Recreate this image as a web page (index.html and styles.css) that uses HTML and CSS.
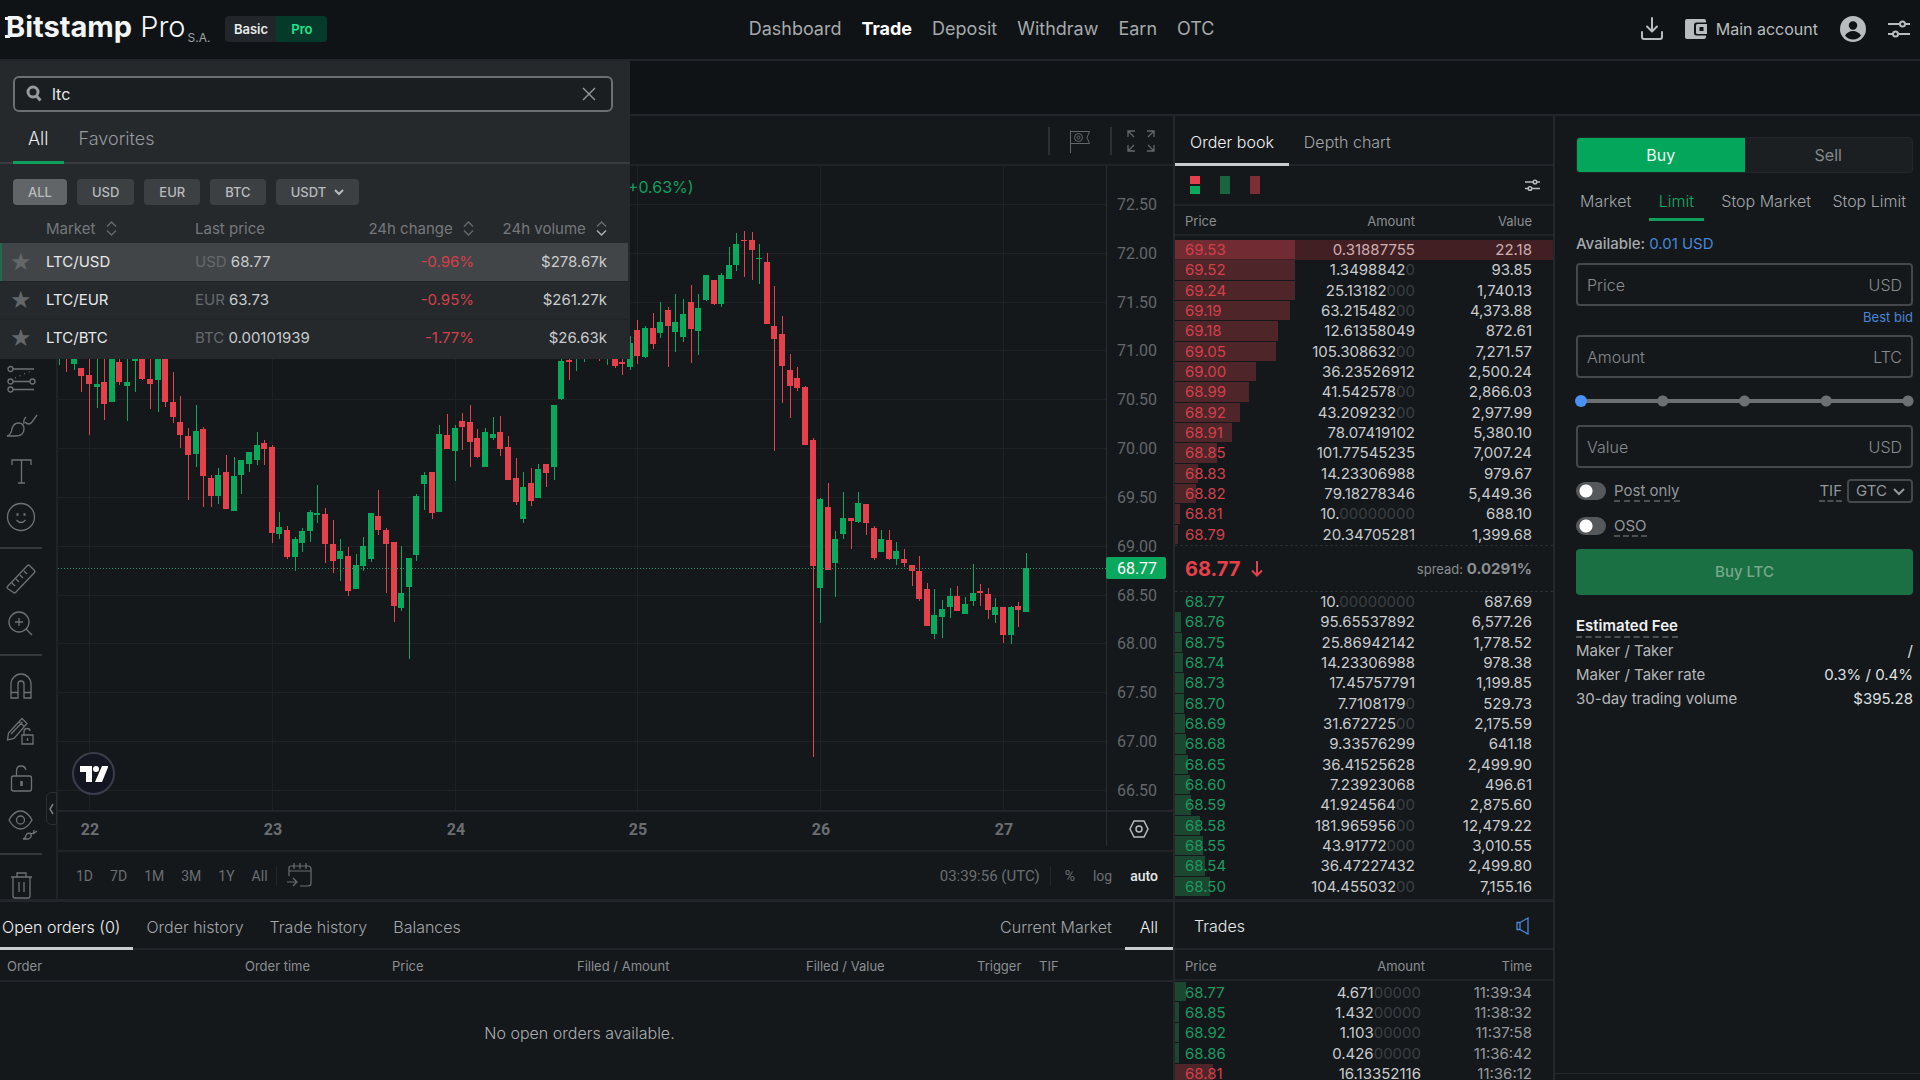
FILE: index.html
```html
<!DOCTYPE html>
<html lang="en">
<head>
<meta charset="utf-8">
<title>Bitstamp Pro</title>
<link rel="stylesheet" href="styles.css">
</head>
<body>
<div class="app">
  <header class="topbar">
    <div class="brand">
      <a class="logo" href="#"><b>Bitstamp</b> <span>Pro</span></a>
      <span class="entity">S.A.</span>
      <div class="mode"><button type="button">Basic</button><button type="button" class="on">Pro</button></div>
    </div>
    <nav class="nav">
      <a href="#">Dashboard</a><a href="#" class="on">Trade</a><a href="#">Deposit</a><a href="#">Withdraw</a><a href="#">Earn</a><a href="#">OTC</a>
    </nav>
    <div class="account">
      <button type="button" class="icon-btn" aria-label="Install app"><svg width="24" height="24" viewBox="0 0 24 24" fill="none" stroke="currentColor" stroke-width="2" stroke-linecap="round" stroke-linejoin="round"><path d="M12 1v13M7 9.500l5 5 5-5M2 15v5q0 2 2 2h16q2 0 2-2v-5"/></svg></button>
      <button type="button" class="wallet"><svg width="24" height="22" viewBox="0 0 24 22"><path fill="currentColor" d="M3 1h17q2 0 2 2v1.500H12.500q-2.500 0-2.500 2.500v8q0 2.500 2.500 2.500H22V19q0 2-2 2H3q-2 0-2-2V3q0-2 2-2z"/><path fill="currentColor" fill-rule="evenodd" d="M13.500 6H23v10h-9.500q-1.500 0-1.500-1.500v-7q0-1.500 1.500-1.500zm2 3v4h4V9z"/></svg>Main account</button>
      <button type="button" class="icon-btn" aria-label="Profile"><svg width="26" height="26" viewBox="0 0 26 26"><circle cx="13" cy="13" r="13" fill="currentColor"/><circle cx="13" cy="9.500" r="4.200" fill="#0f1316"/><path d="M5 19.500q3-4.500 8-4.500t8 4.500q-3 4-8 4t-8-4z" fill="#0f1316"/></svg></button>
      <button type="button" class="icon-btn" aria-label="Settings"><svg width="22" height="20" viewBox="0 0 22 20" fill="none" stroke="currentColor" stroke-width="2"><path d="M0 5h12M17 5h5M0 15h5M10 15h12"/><circle cx="14.500" cy="5" r="2.500"/><circle cx="7.500" cy="15" r="2.500"/></svg></button>
    </div>
  </header>

  <div class="marketbar">
    <section class="picker" aria-label="Markets">
      <div class="search">
        <svg width="16" height="18" viewBox="0 0 16 18" fill="none" stroke="currentColor" stroke-width="3"><circle cx="7" cy="7" r="5"/><path d="M10.500 11l4 4.500"/></svg>
        <input type="text" value="ltc" aria-label="Search markets">
        <button type="button" aria-label="Clear"><svg width="14" height="14" viewBox="0 0 14 14" stroke="currentColor" stroke-width="1.400"><path d="M1 1l12 12M13 1L1 13"/></svg></button>
      </div>
      <div class="picker-tabs"><button type="button" class="on">All</button><button type="button">Favorites</button></div>
      <div class="chips">
        <button type="button" class="on">ALL</button><button type="button">USD</button><button type="button">EUR</button><button type="button">BTC</button>
        <button type="button">USDT <svg width="10" height="8" viewBox="0 0 10 8" fill="none" stroke="currentColor" stroke-width="2"><path d="M1 2l4 4 4-4"/></svg></button>
      </div>
      <table class="markets">
        <colgroup><col class="c-star"><col class="c-market"><col class="c-last"><col class="c-change"><col class="c-vol"></colgroup>
        <thead><tr><th></th>
          <th>Market <svg width="11" height="15" viewBox="0 0 11 15"><path d="M1 5.500l4.500-4.500L10 5.500M1 9.500l4.500 4.500L10 9.500"/></svg></th>
          <th>Last price</th>
          <th class="num">24h change <svg width="11" height="15" viewBox="0 0 11 15"><path d="M1 5.500l4.500-4.500L10 5.500M1 9.500l4.500 4.500L10 9.500"/></svg></th>
          <th class="num">24h volume <svg width="11" height="15" viewBox="0 0 11 15"><path d="M1 5.500l4.500-4.500L10 5.500"/><path class="hot" d="M1 9.500l4.500 4.500L10 9.500"/></svg></th></tr></thead>
        <tbody>
          <tr class="on"><td class="star">★</td><td class="pair">LTC/USD</td><td><i>USD</i> 68.77</td><td class="num down">-0.96%</td><td class="num">$278.67k</td></tr>
          <tr><td class="star">★</td><td class="pair">LTC/EUR</td><td><i>EUR</i> 63.73</td><td class="num down">-0.95%</td><td class="num">$261.27k</td></tr>
          <tr><td class="star">★</td><td class="pair">LTC/BTC</td><td><i>BTC</i> 0.00101939</td><td class="num down">-1.77%</td><td class="num">$26.63k</td></tr>
        </tbody>
      </table>
    </section>
  </div>

  <main class="board">
    <div class="left">
      <section class="chart" aria-label="Price chart">
        <div class="chart-top">
          <button type="button" aria-label="Layout"><svg width="22" height="24" viewBox="0 0 22 24" fill="none" stroke="currentColor"><path d="M1.500 24V1.500M1.500 2.500h19l-2.500 6 2.500 6h-19"/><circle cx="9.500" cy="8.500" r="4"/><circle cx="9.500" cy="8.500" r="1.500"/></svg></button>
          <button type="button" aria-label="Full screen"><svg width="28" height="22" viewBox="0 0 28 22" fill="none" stroke="currentColor" stroke-width="1.300"><path d="M1 7V1h7M1 1l6 6M20 1h7v6M27 1l-6 6M1 15v6h7M1 21l6-6M27 15v6h-7M27 21l-6-6"/></svg></button>
        </div>
        <div class="chart-mid">
          <div class="tools">
            <button type="button" aria-label="Patterns"><svg viewBox="0 0 30 30"><circle cx="4.500" cy="4" r="2.500"/><circle cx="4.500" cy="16.500" r="2.500"/><circle cx="26.500" cy="16.500" r="2.500"/><circle cx="4.500" cy="24.500" r="2.500"/><path d="M7 4h21M7 16.500h17M7 24.500h21"/><path stroke-dasharray="1 4" d="M9 13L25 6"/></svg></button>
            <button type="button" aria-label="Brush"><svg viewBox="0 0 30 30"><path d="M1 25q4-1 5-7 1.500-6 6.500-6 5.500 0 5.500 6 0 7-9 7zM18 13q-1-4 2-7M19 11q4 4 7 0l5-7"/></svg></button>
            <button type="button" aria-label="Text"><svg viewBox="0 0 30 30"><path d="M6 8V3h19v5M15.500 3v23M12 26h7"/></svg></button>
            <button type="button" aria-label="Icons"><svg viewBox="0 0 30 30"><circle cx="15" cy="14" r="13.500"/><path d="M10.500 17q4.500 5 9 0"/><path stroke-width="2.500" d="M10.500 11.500h2M17.500 11.500h2"/></svg></button>
            <hr>
            <button type="button" aria-label="Measure"><svg viewBox="0 0 30 30"><path d="M1.500 22.500L21.500 1.500q1-1 2 0l5 5q1 1 0 2L9.500 28.500q-1 1-2 0l-6-4q-1-1 0-2zM6 19l3 3M10 15l3 3M14 11l3 3M18 7l3 3"/></svg></button>
            <button type="button" aria-label="Zoom in"><svg viewBox="0 0 30 30"><circle cx="13" cy="12" r="10"/><path d="M20 19l6 6M13 8v8M9 12h8"/></svg></button>
            <hr>
            <button type="button" aria-label="Magnet"><svg viewBox="0 0 30 30"><path d="M5 27V13a10 10 0 0 1 20 0v14h-7V13a3 3 0 0 0-6 0v14zM5 21.500h7M18 21.500h7"/></svg></button>
            <button type="button" aria-label="Stay in drawing mode"><svg viewBox="0 0 30 30"><path d="M1.500 23l1-7L16 1.500l5 5L8 21.500zM13 5l5 4M5 17L16.500 5M16 18h11v9H16zM18 18v-3q0-3.500 3-3.500t3 2.500M21.500 21v3"/></svg></button>
            <button type="button" aria-label="Lock drawings"><svg viewBox="0 0 30 30"><rect x="5.500" y="13" width="20" height="15" rx="2"/><path d="M10.500 13V8q0-5 4.500-5 4 0 5 4"/><path stroke-width="2.500" d="M15.500 18v5"/></svg></button>
            <button type="button" aria-label="Hide drawings"><svg viewBox="0 0 30 30"><path d="M3 11q5-9 11.500-9T26 11q-5 9-11.500 9T3 11z"/><circle cx="14.500" cy="11" r="4"/><path d="M17 30q3-1 3-4 2-3 5-1 1 4-3 5zM24 24q4 2 4-3M27 25l4-3"/></svg></button>
            <hr>
            <button type="button" aria-label="Remove drawings"><svg viewBox="0 0 30 30"><path d="M5 7h21M11 7V3h9v4M7 7v19q0 2 2 2h13q2 0 2-2V7M13 12v10M18 12v10"/></svg></button>
          </div>
          <button type="button" class="collapse" aria-label="Collapse toolbar"><svg width="5" height="12" viewBox="0 0 5 12" fill="none" stroke="currentColor" stroke-width="1.500"><path d="M4 1L1 6l3 5"/></svg></button>
          <div class="plot">
            <svg id="plot" role="img" aria-label="LTC/USD candles"></svg>
            <span class="legend">(+0.63%)</span>
            <a class="tv" href="#" aria-label="TradingView"><svg width="28" height="16" viewBox="0 0 28 16" fill="#fff"><path d="M0 0h12v16H6V6H0zM22 0h6.500L22 16h-7z"/><circle cx="16" cy="3" r="3"/></svg></a>
            <div class="range">
              <div class="range-set"><button type="button">1D</button><button type="button">7D</button><button type="button">1M</button><button type="button">3M</button><button type="button">1Y</button><button type="button">All</button></div>
              <button type="button" class="goto" aria-label="Go to date"><svg width="25" height="25" viewBox="0 0 25 25" fill="none" stroke="currentColor" stroke-width="1.200"><path d="M2 13V5q0-2 2-2h17q3 0 3 3v14q0 3-3 3h-8M2 8h22M7 0v6M13 0v6M19 0v6M0 19h9M6 15l4 4-4 4"/></svg></button>
              <div class="scale"><button type="button" class="clock">03:39:56 (UTC)</button><button type="button">%</button><button type="button">log</button><button type="button" class="on">auto</button></div>
            </div>
          </div>
        </div>
      </section>
      <section class="orders">
        <div class="tabs">
          <button type="button" class="on">Open orders (0)</button><button type="button">Order history</button><button type="button">Trade history</button><button type="button">Balances</button>
          <button type="button" class="push">Current Market</button><button type="button" class="on">All</button>
        </div>
        <table class="open">
          <colgroup><col class="o1"><col class="o2"><col class="o3"><col class="o4"><col class="o5"><col class="o6"><col></colgroup>
          <thead><tr><th>Order</th><th>Order time</th><th>Price</th><th>Filled / Amount</th><th>Filled / Value</th><th>Trigger</th><th>TIF</th></tr></thead>
          <tbody><tr><td colspan="7">No open orders available.</td></tr></tbody>
        </table>
      </section>
    </div>

    <div class="middle">
      <section class="book">
        <div class="tabs book-tabs"><button type="button" class="on">Order book</button><button type="button">Depth chart</button></div>
        <div class="book-view">
          <button type="button" class="v-both" aria-label="Both sides"></button><button type="button" class="v-buy" aria-label="Bids"></button><button type="button" class="v-sell" aria-label="Asks"></button>
          <button type="button" class="v-set" aria-label="Book settings"><svg width="15" height="14" viewBox="0 0 15 14" fill="none" stroke="currentColor" stroke-width="1.500"><path d="M0 4h8M12 4h3M0 10.500h3M7 10.500h8"/><circle cx="10" cy="4" r="1.800"/><circle cx="5" cy="10.500" r="1.800"/></svg></button>
        </div>
        <div class="cols"><span>Price</span><span>Amount</span><span>Value</span></div>
        <table class="ladder sell" aria-label="Asks"><tbody id="asks"></tbody></table>
        <div class="last"><strong>68.77</strong><svg width="12" height="16" viewBox="0 0 12 16" fill="none" stroke="currentColor" stroke-width="2"><path d="M6 0v14M1 9.500l5 5 5-5"/></svg><span>spread: <b>0.0291%</b></span></div>
        <table class="ladder buy" aria-label="Bids"><tbody id="bids"></tbody></table>
      </section>
      <section class="trades">
        <div class="trades-head"><h2>Trades</h2><button type="button" aria-label="Sound"><svg width="13" height="18" viewBox="0 0 13 18" fill="none" stroke="currentColor" stroke-width="1.300"><path d="M4 5.500L12 1v16l-8-4.500zM4 5.500H1v7h3"/></svg></button></div>
        <div class="cols"><span>Price</span><span>Amount</span><span>Time</span></div>
        <table class="ladder recent" aria-label="Recent trades"><tbody id="trades"></tbody></table>
      </section>
    </div>

    <form class="ticket">
      <div class="side"><button type="button" class="on">Buy</button><button type="button">Sell</button></div>
      <div class="kinds"><button type="button">Market</button><button type="button" class="on">Limit</button><button type="button">Stop Market</button><button type="button">Stop Limit</button></div>
      <p class="avail">Available: <a href="#">0.01 USD</a></p>
      <div class="field"><input type="text" placeholder="Price" aria-label="Price"><span>USD</span></div>
      <a class="best" href="#">Best bid</a>
      <div class="field"><input type="text" placeholder="Amount" aria-label="Amount"><span>LTC</span></div>
      <input class="slider" type="range" min="0" max="100" value="0" aria-label="Share of balance">
      <div class="field"><input type="text" placeholder="Value" aria-label="Value"><span>USD</span></div>
      <div class="opts">
        <input type="checkbox" id="post"><label for="post">Post only</label>
        <label class="tif" for="tif">TIF</label>
        <span class="select"><select id="tif"><option>GTC</option></select><svg width="12" height="8" viewBox="0 0 12 8" fill="none" stroke="currentColor" stroke-width="2"><path d="M1 1l5 5 5-5"/></svg></span>
      </div>
      <div class="opts"><input type="checkbox" id="oso"><label for="oso">OSO</label></div>
      <button type="submit" class="submit" disabled>Buy LTC</button>
      <h3>Estimated Fee</h3>
      <dl class="fees"><dt>Maker / Taker</dt><dd>/</dd><dt>Maker / Taker rate</dt><dd>0.3% / 0.4%</dd><dt>30-day trading volume</dt><dd>$395.28</dd></dl>
    </form>
  </main>
</div>
<script src="app.js"></script>
</body>
</html>
```
FILE: styles.css
```css
* { box-sizing: border-box; }
body { margin: 0; background: #14181b; color: #c9cbcd; font: 15px/20px Inter, "Liberation Sans", sans-serif; }
button { margin: 0; padding: 0; border: 0; background: none; color: inherit; font: inherit; cursor: pointer; white-space: nowrap; }
a { color: inherit; text-decoration: none; }
svg { display: block; flex: none; }
h2, h3, p, dl, dd { margin: 0; font: inherit; }
table { border-collapse: collapse; border-spacing: 0; }
th { font-weight: 400; text-align: left; }
th, td { padding: 0; }

.app { display: flex; flex-direction: column; height: 100vh; overflow: hidden; }

/* top bar */
.topbar { display: flex; justify-content: space-between; align-items: center; height: 61px; flex: none; padding: 0 10px 2px 5px; background: #0f1316; border-bottom: 2px solid #22262a; }
.brand { display: flex; align-items: center; }
.logo { display: block; position: relative; margin-top: -4px; padding-left: 1px; color: #f4f5f6; font: 400 29px/32px Inter, sans-serif; }
.logo b { font-weight: 700; }
.logo span { font-weight: 300; }
.logo::before { content: ""; position: absolute; left: 0; top: 6px; width: 5px; height: 15px; border: solid #f4f5f6; border-width: 3px 0; }
.entity { margin: 18px 15px 0 2px; font-size: 12px; line-height: 16px; color: #a0a3a6; }
.mode { display: flex; height: 26px; border-radius: 4px; overflow: hidden; background: #22262a; font-weight: 600; font-size: 13px; color: #e8eaeb; }
.mode button { width: 51px; }
.mode .on { background: #053a2a; color: #1fe58c; }
.nav { display: flex; gap: 20px; margin-left: 18px; font-size: 18px; line-height: 24px; color: #a6a9ab; }
.nav .on { color: #fff; font-weight: 700; }
.account { display: flex; align-items: center; color: #b9bcbe; }
.icon-btn { margin-left: 22px; }
.wallet { display: flex; align-items: center; gap: 8px; margin-left: 20px; font-size: 16px; }

/* market bar and market picker */
.marketbar { position: relative; z-index: 2; flex: none; height: 55px; background: #0f1316; border-bottom: 2px solid #22262a; }
.picker { position: absolute; top: 0; left: 0; width: 630px; padding-bottom: 2px; background: #25292c; overflow: hidden; }
.search { display: flex; align-items: center; gap: 10px; height: 36px; margin: 15px 17px 0 13px; padding: 0 15px 0 11px; border: 2px solid #6d7073; border-radius: 6px; background: #1a1e21; color: #97999c; }
.search input { flex: 1; min-width: 0; padding: 0; border: 0; background: none; outline: 0; color: #e6e8e9; font: inherit; font-size: 16px; }
.picker-tabs { display: flex; height: 52px; padding-left: 13px; border-bottom: 2px solid #383c3f; font-size: 18px; font-weight: 300; color: #95989b; }
.picker-tabs button { height: 52px; padding: 5px 15px 0; border-bottom: 3px solid transparent; }
.picker-tabs .on { border-bottom-color: #0f9f5d; color: #e6e8e9; }
.chips { display: flex; gap: 10px; padding: 15px 13px 0; }
.chips button { display: flex; align-items: center; gap: 8px; height: 26px; padding: 0 15px; border-radius: 4px; background: #3c4043; color: #b9bbbd; font-size: 13px; font-weight: 500; }
.chips .on { background: #626567; }
.markets { width: 628px; table-layout: fixed; margin-top: 10px; }
.c-star { width: 46px; } .c-market { width: 149px; } .c-last { width: 151px; } .c-change { width: 128px; }
.markets th { height: 28px; color: #75787b; }
.markets th svg { display: inline-block; vertical-align: -2px; margin-left: 6px; fill: none; stroke: #63666a; stroke-width: 1.500; }
.markets .hot { stroke: #a9abad; }
.markets td { height: 38px; border-bottom: 1px solid #202427; }
.markets tr:last-child td { border: 0; }
.markets .on { background: #424547; box-shadow: inset 2px 0 #23694c; }
.markets .num { text-align: right; }
.markets .num:last-child { padding-right: 21px; }
.markets .star { padding-left: 10px; font: 24px/20px "DejaVu Sans", sans-serif; color: #64676a; }
.markets .pair { color: #e6e8e9; }
.markets i { font-style: normal; color: #66696c; }
.down { color: #d3404b; }

/* board */
.board { flex: 1; min-height: 0; display: grid; grid-template-columns: minmax(0, 1fr) 382px 365px; grid-template-rows: minmax(0, 1fr); }
.left, .middle { display: flex; flex-direction: column; min-height: 0; min-width: 0; }
.chart { flex: 1; min-height: 0; display: flex; flex-direction: column; overflow: hidden; }
.chart-top { flex: none; display: flex; justify-content: flex-end; align-items: center; height: 50px; padding-top: 2px; border-bottom: 2px solid #1f2326; color: #64676a; }
.chart-top button { display: flex; align-items: center; height: 28px; padding: 0 19px; border-left: 2px solid #2c3033; }
.chart-top button:last-child { padding: 0 18px 0 15px; }
.chart-mid { position: relative; flex: 1; min-height: 0; display: flex; }
.tools { width: 58px; flex: none; padding-top: 191px; border-right: 2px solid #1f2326; color: #6f7275; }
.tools button { display: flex; align-items: center; justify-content: center; width: 42px; height: 46px; }
.tools svg { width: 30px; height: 30px; overflow: visible; fill: none; stroke: currentColor; stroke-width: 1.300; }
.tools hr { width: 42px; height: 2px; margin: 6px 0 7px; border: 0; background: #34383b; }
.collapse { position: absolute; left: 46px; bottom: 74px; display: flex; align-items: center; justify-content: center; width: 11px; height: 33px; border: 1px solid #2a2e31; border-radius: 5px 0 0 5px; color: #7b7e80; }
.plot { position: relative; flex: 1; min-width: 0; display: flex; flex-direction: column; }
#plot { flex: 1; min-height: 0; width: 100%; font: 16px Roboto, sans-serif; }
.legend { position: absolute; left: 564px; top: 11px; color: #0f9f5d; font-size: 16px; }
.tv { position: absolute; left: 14px; bottom: 104px; display: flex; align-items: center; justify-content: center; width: 43px; height: 43px; border: 2px solid #3b3d4b; border-radius: 50%; background: #131520; }
.range { flex: none; display: flex; align-items: center; height: 49px; padding: 0 15px 0 18px; border-top: 2px solid #1f2326; color: #6b6e71; font: 14px/20px Roboto, sans-serif; }
.range-set { display: flex; gap: 17px; padding-right: 8px; border-right: 1px solid #24282b; }
.goto { margin-left: 10px; }
.scale { display: flex; gap: 18px; margin-left: auto; }
.clock { padding-right: 10px; margin-right: -4px; border-right: 1px solid #24282b; font-size: 15px; }
.scale .on { color: #e6e8e9; font-weight: 500; }

/* orders */
.orders { flex: none; height: 181px; border-top: 3px solid #22262a; }
.tabs { display: flex; height: 48px; border-bottom: 2px solid #22262a; color: #a2a5a7; font-size: 16px; font-weight: 300; }
.tabs button { height: 48px; padding: 4px 15px 0; border-bottom: 3px solid transparent; }
.tabs .on { border-color: #c9cbcd; color: #f0f1f2; }
.orders .tabs button { padding: 4px 13px 0; }
.orders .tabs button:first-child { padding-left: 2px; }
.orders .tabs button:last-child { padding: 4px 15px 0; }
.orders .tabs .push { margin-left: auto; }
.open { width: 100%; table-layout: fixed; }
.o1 { width: 245px; } .o2 { width: 147px; } .o3 { width: 185px; } .o4 { width: 229px; } .o5 { width: 171px; } .o6 { width: 62px; }
.open th, .cols { color: #8b8e91; font-size: 13px; }
.open th { height: 31px; padding-top: 2px; border-bottom: 2px solid #22262a; }
.open th:first-child { padding-left: 7px; }
.open td { height: 102px; padding-right: 14px; text-align: center; color: #aaadaf; font-size: 16px; font-weight: 300; }

/* order book */
.middle { border-left: 2px solid #24282b; border-right: 2px solid #24282b; }
.book { flex: 1; min-height: 0; overflow: hidden; display: flex; flex-direction: column; }
.book-tabs { flex: none; height: 50px; }
.book-tabs button { height: 50px; }
.book-view { flex: none; display: flex; align-items: center; gap: 20px; height: 40px; padding: 0 13px 0 15px; border-bottom: 2px solid #1f2326; color: #b9bbbd; }
.book-view button { width: 10px; height: 18px; }
.v-both { background: linear-gradient(#e5414d 8px, transparent 8px 10px, #0aa85c 10px); }
.v-buy { background: #1a6540; }
.v-sell { background: #7e2d35; }
.book-view .v-set { width: auto; height: auto; margin-left: auto; }
.cols { flex: none; display: grid; grid-template-columns: 80px 1fr 117px; align-items: center; height: 30px; padding: 2px 21px 0 10px; border-bottom: 2px solid #1f2326; }
.cols span + span { text-align: right; }
.ladder { flex: none; width: 100%; height: 305px; table-layout: fixed; font-size: 15px; line-height: 18px; }
.ladder td { position: relative; padding: 0; text-align: right; }
.ladder td:first-child { width: 90px; padding-left: 10px; text-align: left; }
.ladder td:last-child { width: 138px; padding-right: 21px; }
.ladder .bar { position: absolute; left: 0; top: 0; bottom: 1px; background: #4e2529; }
.ladder .px { position: relative; color: #d3404b; }
.ladder .z { color: #3b3f42; }
.ladder tr.up .bar { background: #1b4630; }
.ladder tr.up .px { color: #1c9a60; }
.ladder tr.hit { background: #421f23; color: #cfaeb0; }
.ladder tr.hit .bar { background: #702c32; }
.sell { margin-top: 4px; }
.last { flex: none; display: flex; align-items: center; height: 47px; padding: 0 21px 0 10px; border: dashed #2a2e31; border-width: 1px 0; color: #e5414d; }
.last strong { margin-right: 11px; font-size: 20px; font-weight: 700; }
.last span { margin-left: auto; color: #8b8e91; font-size: 13px; }
.last b { font-size: 15px; font-weight: 700; }
.trades { flex: none; height: 181px; overflow: hidden; border-top: 3px solid #22262a; }
.trades-head { display: flex; justify-content: space-between; align-items: center; height: 48px; padding: 2px 24px 0 19px; border-bottom: 2px solid #22262a; color: #e6e8e9; font-size: 16px; font-weight: 300; }
.trades-head button { color: #4a86d8; }
.trades .cols { height: 31px; grid-template-columns: 80px 1fr 107px; }
.recent { height: 102px; margin-top: 1px; line-height: 19px; }
.ladder.recent td:last-child { width: 132px; color: #96999b; }

/* order ticket */
.ticket { display: flex; flex-direction: column; padding: 21px 7px 0 21px; margin-bottom: 6px; border-bottom: 1px solid #24282b; overflow: hidden; }
.side { flex: none; display: flex; height: 36px; border: 1px solid #22262a; border-radius: 4px; overflow: hidden; background: #1b1f22; color: #85888b; font-size: 16px; }
.side button { flex: 1; }
.side .on { background: #03a65a; color: #eafaf2; }
.kinds { display: flex; justify-content: space-between; margin-top: 8px; padding-right: 3px; color: #a2a5a7; font-size: 16px; font-weight: 300; }
.kinds button { height: 40px; padding: 3px 4px 0; border-bottom: 3px solid transparent; }
.kinds .on { padding: 3px 10px 0; border-color: #0f9f5d; color: #0fae66; }
.avail { margin: 13px 0 9px; color: #a6a9ab; font-weight: 500; }
.avail a, .best { color: #4a86d8; font-weight: 400; }
.best { align-self: flex-end; margin: 1px 0 8px; font-size: 13px; }
.field { flex: none; display: flex; align-items: center; height: 43px; padding: 0 9px; border: 2px solid #45484b; border-radius: 4px; color: #888b8d; font-size: 16px; font-weight: 300; }
.field input { flex: 1; min-width: 0; padding: 0; border: 0; background: none; outline: 0; color: #e6e8e9; font: inherit; }
.field input::placeholder { color: #888b8d; opacity: 1; }
.slider { appearance: none; flex: none; width: calc(100% + 2px); height: 14px; margin: 16px 0 17px -1px; background: none; }
.slider::-webkit-slider-runnable-track { height: 12px; background:
  radial-gradient(circle at calc(25% + 3px) 50%, #6d7073 5px, transparent 6px),
  radial-gradient(circle at 50% 50%, #6d7073 5px, transparent 6px),
  radial-gradient(circle at calc(75% - 3px) 50%, #6d7073 5px, transparent 6px),
  radial-gradient(circle at calc(100% - 6px) 50%, #6d7073 5px, transparent 6px),
  linear-gradient(#6d7073, #6d7073) 6px 50% / calc(100% - 12px) 4px no-repeat; }
.slider::-webkit-slider-thumb { appearance: none; width: 12px; height: 12px; border-radius: 50%; background: #4a90f5; }
.opts { display: flex; align-items: center; height: 24px; margin-top: 11px; color: #94979a; }
.opts + .opts { margin-top: 11px; }
.opts label { border-bottom: 2px dashed #4d5053; line-height: 19px; }
.opts input { appearance: none; width: 30px; height: 18px; margin: 0 8px 0 0; border-radius: 9px; background: radial-gradient(circle at 10px 9px, #fff 6px, transparent 7px), #55585b; }
.opts .tif { margin: 0 5px 0 auto; }
.select { position: relative; display: flex; align-items: center; width: 66px; height: 24px; border: 2px solid #45484b; border-radius: 4px; }
.select select { appearance: none; width: 100%; padding: 0 0 0 7px; border: 0; background: none; color: inherit; font: inherit; outline: 0; }
.select svg { position: absolute; right: 6px; top: 7px; pointer-events: none; }
.submit { flex: none; height: 46px; margin: 11px 0 21px; border-radius: 4px; background: #1a7042; color: #76a98c; font-weight: 500; }
.ticket h3 { align-self: flex-start; border-bottom: 2px dashed #4d5053; color: #f0f1f2; font-weight: 600; }
.fees { display: grid; grid-template-columns: 1fr auto; margin-top: 1px; line-height: 24px; color: #b4b7b9; }
.fees dd { text-align: right; color: #dfe1e2; }
```
FILE: app.js
```js
// Hourly candles: direction, body top, body bottom, high, low, counted in steps below BASE.
const BASE = 71.007, STEP = 293.4;
const candles = `g -30 0 -60 46;r -30 0 -60 66;g 0 42 -20 62;r 56 80 54 128;r 75 102 0 255;g 104 111 0 176;r 96 162 0 210;g 0 158 0 158;r 38 96 0 105;g 96 108 0 214;g 0 33 0 128;r 0 88 0 90;r 87 104 0 178;g 0 90 0 188;r 0 157 0 172;r 156 201 66 219;r 216 257 140 294;r 258 315 236 451;g 243 312 166 351;r 237 380 232 471;r 384 438 377 471;g 375 440 354 462;r 366 477 317 477;g 378 483 323 483;g 331 375 331 432;g 308 342 308 366;g 285 330 248 345;r 279 297 270 345;r 291 552 285 582;g 531 555 486 570;r 542 624 530 629;g 570 624 563 665;g 546 582 534 609;g 487 546 480 579;g 489 495 406 520;r 494 585 475 641;r 585 635 510 671;g 606 629 568 696;r 621 726 594 741;g 648 718 613 720;g 591 651 564 665;g 489 630 489 638;r 498 542 422 557;r 540 585 534 731;r 579 771 579 819;g 732 777 591 785;g 627 713 627 929;g 438 618 432 635;g 375 402 366 482;r 367 489 367 507;g 252 488 226 488;r 255 297 192 297;g 234 305 225 395;r 213 231 189 300;r 216 276 165 351;r 264 321 237 326;g 248 351 236 351;g 252 266 202 270;r 246 299 198 318;r 291 390 260 390;r 384 456 324 465;g 411 509 366 519;r 401 453 356 468;g 357 444 342 444;r 342 369 342 411;g 165 353 165 392;g 35 147 28 150;r 30 38 0 90;g -40 0 -60 63;g -40 0 -60 36;g -40 0 -60 20;r -40 0 -60 34;g -40 0 -60 46;r 0 48 -30 54;r 38 44 0 76;g -20 52 -40 62;r -60 20 -90 42;g -65 22 -70 24;r -65 -18 -112 -3;g -83 -49 -143 -34;r -120 -72 -129 51;g -83 -54 -168 8;g -106 -39 -154 -24;r -144 -62 -194 41;g -127 -55 -167 17;g -224 -151 -225 -148;r -210 -137 -210 -136;g -224 -138 -230 -130;g -255 -213 -308 -213;g -319 -255 -350 -237;r -330 -327 -357 -220;r -329 -299 -355 -211;g -275 -272 -317 -198;r -264 -78 -291 -76;r -71 -33 -192 303;r -46 48 -101 161;r 62 108 12 204;r 84 115 51 125;r 113 287 108 287;r 270 650 264 1225;g 448 717 444 822;r 471 662 401 662;g 568 642 545 744;g 504 555 426 570;r 504 515 504 600;g 459 516 426 519;r 462 521 462 558;r 534 626 530 631;g 570 608 542 608;r 573 630 541 633;g 606 630 579 647;r 629 641 600 654;r 648 666 648 710;r 665 749 620 754;r 720 831 701 831;g 797 854 720 869;g 780 804 752 866;g 741 774 716 807;r 741 786 710 786;g 765 795 743 795;g 732 756 644 770;r 725 732 705 771;r 735 783 716 810;g 774 798 747 822;r 774 858 774 882;g 774 858 770 884;r 770 783 758 833;g 657 787 612 787`
  .split(';').map(c => { const [d, ...v] = c.split(' '); return [d, ...v.map(n => BASE - n / STEP)]; });

const TOP = 72.889, SPAN = 6.595, AXIS = 67, TIME = 40, BAR = 7.617;

function draw() {
  const svg = document.getElementById('plot');
  const { width, height } = svg.getBoundingClientRect();
  const w = Math.round(width) - AXIS, h = Math.round(height) - TIME;
  const y = p => Math.round((TOP - p) / SPAN * h);
  const x = i => 0.5 + i * BAR;
  let out = '';
  for (let p = 72.5; p > TOP - SPAN; p -= 0.5) {
    out += `<rect x="0" y="${y(p)}" width="${w}" height="1" fill="#1e2225"/>`;
    out += `<text x="${w + 31}" y="${y(p) + 6}" text-anchor="middle" fill="#64676a">${p.toFixed(2)}</text>`;
  }
  for (let d = 0; d < 6; d++) {
    const dx = Math.round(x(4 + d * 24));
    out += `<rect x="${dx}" y="0" width="1" height="${h}" fill="#1e2225"/>`;
    out += `<text x="${dx + 1}" y="${h + 25}" text-anchor="middle" font-weight="700" fill="#6b6e71">${22 + d}</text>`;
  }
  out += `<rect x="0" y="${h}" width="${w + AXIS}" height="2" fill="#22262a"/>`;
  out += `<rect x="${w}" y="0" width="1" height="${h + 36}" fill="#2a2e31"/>`;
  candles.forEach(([dir, top, bottom, high, low], i) => {
    const fill = dir === 'g' ? '#0aa85c' : '#e5414d', cx = Math.round(x(i));
    out += `<rect x="${cx}" y="${y(high)}" width="1" height="${y(low) - y(high)}" fill="${fill}"/>`;
    out += `<rect x="${cx - 3}" y="${y(top)}" width="6" height="${Math.max(1, y(bottom) - y(top))}" fill="${fill}"/>`;
  });
  const now = y(68.77);
  out += `<path d="M0 ${now + 0.5}H${w}" stroke="#2f9a6a" stroke-dasharray="1 2"/>`;
  out += `<rect x="${w}" y="${now - 11}" width="60" height="22" rx="2" fill="#0aa85c"/>`;
  out += `<text x="${w + 31}" y="${now + 6}" text-anchor="middle" fill="#fff">68.77</text>`;
  out += `<g transform="translate(${w + 33} ${h + 19})" fill="none" stroke="#b9bbbd" stroke-width="1.500"><path d="M-9 0L-5-8H5L9 0 5 8H-5z"/><circle r="3"/></g>`;
  svg.innerHTML = out;
}

function row(id, line, cls) {
  const [price, amount, zeros, last, depth] = line.split(' ');
  document.getElementById(id).insertAdjacentHTML('beforeend',
    `<tr class="${cls}"><td><span class="bar" style="width:${depth}px"></span><span class="px">${price}</span></td>` +
    `<td>${amount}<span class="z">${'0'.repeat(+zeros)}</span></td><td>${last}</td></tr>`);
}

['69.53 0.31887755 0 22.18 120', '69.52 1.3498842 1 93.85 120', '69.24 25.13182 3 1,740.13 120', '69.19 63.215482 2 4,373.88 115', '69.18 12.61358049 0 872.61 103', '69.05 105.308632 2 7,271.57 101', '69.00 36.23526912 0 2,500.24 81', '68.99 41.542578 2 2,866.03 74', '68.92 43.209232 2 2,977.99 65', '68.91 78.07419102 0 5,380.10 57', '68.85 101.77545235 0 7,007.24 42', '68.83 14.23306988 0 979.67 23', '68.82 79.18278346 0 5,449.36 21', '68.81 10. 8 688.10 5', '68.79 20.34705281 0 1,399.68 3']
  .forEach((l, i) => row('asks', l, i ? '' : 'hit'));
['68.77 10. 8 687.69 0', '68.76 95.65537892 0 6,577.26 6', '68.75 25.86942142 0 1,778.52 7', '68.74 14.23306988 0 978.38 8', '68.73 17.45757791 0 1,199.85 9', '68.70 7.7108179 1 529.73 9', '68.69 31.672725 2 2,175.59 10', '68.68 9.33576299 0 641.18 11', '68.65 36.41525628 0 2,499.90 13', '68.60 7.23923068 0 496.61 15', '68.59 41.924564 2 2,875.60 16', '68.58 181.965956 2 12,479.22 25', '68.55 43.91772 3 3,010.55 28', '68.54 36.47227432 0 2,499.80 30', '68.50 104.455032 2 7,155.16 35']
  .forEach(l => row('bids', l, 'up'));
['68.77 4.671 5 11:39:34 11 up', '68.85 1.432 5 11:38:32 4 up', '68.92 1.103 5 11:37:58 4 up', '68.86 0.426 5 11:36:42 4 up', '68.81 16.13352116 0 11:36:12 38']
  .forEach(l => row('trades', l, l.split(' ')[5] || ''));

draw();
addEventListener('resize', draw);
```
